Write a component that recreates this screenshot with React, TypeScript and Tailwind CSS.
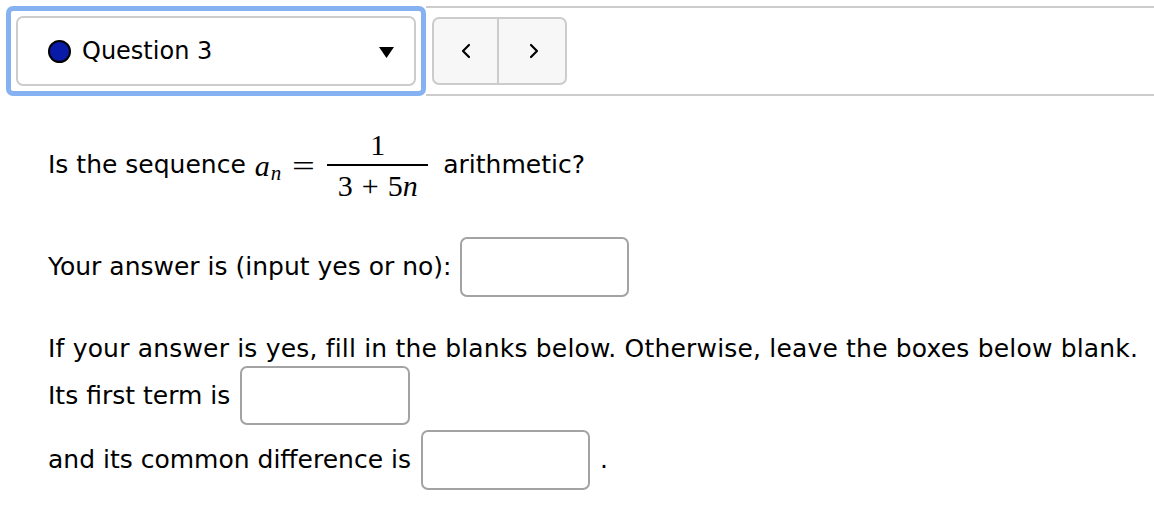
import { ChevronLeft, ChevronRight } from 'lucide-react'

function Blank({ className }: { className: string }) {
  return <div className={`border-2 border-[#a3a3a3] rounded-[7px] bg-white shrink-0 ${className}`} />
}

function Fraction() {
  return (
    <div className="inline-flex flex-col items-center ml-[15px] mr-[15px] font-['Liberation_Serif',serif] text-[30px] leading-[31px]">
      <span className="px-1">1</span>
      <span className="h-[2px] w-[101px] bg-black my-[4px]" />
      <span className="px-1">3<span className="mx-[9px]">+</span>5<i>n</i></span>
    </div>
  )
}

export default function App() {
  return (
    <div className="w-[1154px] h-[508px] bg-white text-black font-['DejaVu_Sans','Liberation_Sans',sans-serif] text-[25px] overflow-hidden">
      <div className="flex pt-[6px]">
        <div className="ml-[6px] w-[420px] h-[90px] border-[5px] border-[#86b2f2] rounded-[7px] p-[5px]">
          <div className="h-full border-2 border-[#cccccc] rounded-[7px] bg-white flex items-center pl-[30px] pr-[20px]">
            <span className="w-[23px] h-[23px] rounded-full bg-[#0a1aa8] border-2 border-black shrink-0" />
            <span className="ml-[11px] flex-1 text-[24px]">Question 3</span>
            <svg width="15" height="11" viewBox="0 0 15 11" className="mt-[2px]">
              <polygon points="0,0 15,0 7.5,11" fill="#000" />
            </svg>
          </div>
        </div>
        <div className="flex-1 h-[90px] border-y-2 border-[#cccccc] pl-[6px] pt-[9px]">
          <div className="flex w-[135px] h-[68px] border-2 border-[#cccccc] rounded-[7px] bg-[#f7f7f7] overflow-hidden">
            <button className="flex-1 flex items-center justify-center border-r-2 border-[#cccccc]">
              <ChevronLeft size={24} strokeWidth={2.2} color="#000" />
            </button>
            <button className="flex-1 flex items-center justify-center pl-[3px]">
              <ChevronRight size={24} strokeWidth={2.2} color="#000" />
            </button>
          </div>
        </div>
      </div>

      <div className="pl-[48px]">
        <div className="flex items-center mt-[33px]">
          <span>Is the sequence</span>
          <span className="ml-[9px] font-['Liberation_Serif',serif] text-[30px] italic">a<span className="relative top-[4px] text-[21px] ml-[1px]">n</span></span>
          <span className="ml-[14px] font-['Liberation_Serif',serif] text-[30px] inline-block scale-x-[1.35]">=</span>
          <Fraction />
          <span>arithmetic?</span>
        </div>

        <div className="flex items-center mt-[36px]">
          <span>Your answer is (input yes or no):</span>
          <Blank className="ml-[9px] w-[169px] h-[60px]" />
        </div>

        <div className="mt-[37px] leading-[30px] tracking-[0.18px]">If your answer is yes, fill in the blanks below. Otherwise, leave the boxes below blank.</div>

        <div className="flex items-center mt-[2px]">
          <span>Its first term is</span>
          <Blank className="ml-[10px] w-[170px] h-[59px]" />
        </div>

        <div className="flex items-center mt-[5px]">
          <span>and its common difference is</span>
          <Blank className="ml-[10px] w-[169px] h-[60px]" />
          <span className="ml-[10px]">.</span>
        </div>
      </div>
    </div>
  )
}
